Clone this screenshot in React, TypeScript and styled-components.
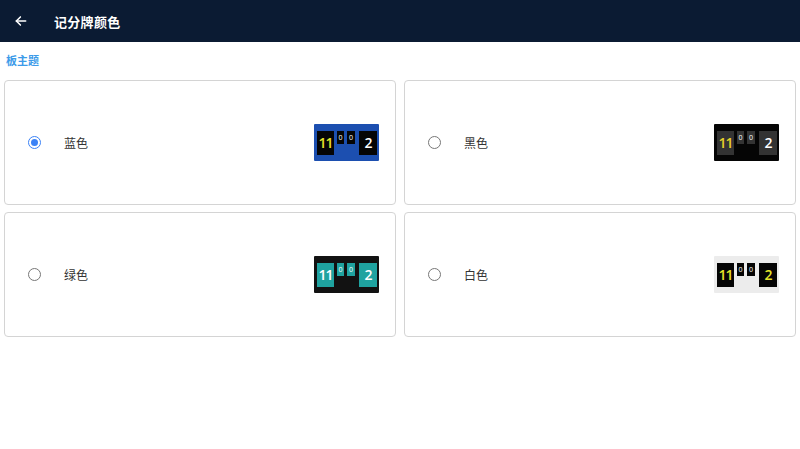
import styled, { createGlobalStyle } from 'styled-components'

const GlobalStyle = createGlobalStyle`
  html, body {
    margin: 0;
    padding: 0;
    background: #ffffff;
    font-family: "Noto Sans CJK SC", "Noto Sans", sans-serif;
  }
`

type Theme = 'blue' | 'black' | 'green' | 'white'

const palettes: Record<Theme, { bg: string; tile: string; small: string; left: string; right: string }> = {
  blue: { bg: '#1c4fb0', tile: '#050505', small: '#050505', left: '#e6e62a', right: '#ffffff' },
  black: { bg: '#050505', tile: '#333333', small: '#333333', left: '#e6d12a', right: '#ffffff' },
  green: { bg: '#121212', tile: '#1fa3a0', small: '#1fa3a0', left: '#ffffff', right: '#ffffff' },
  white: { bg: '#ececec', tile: '#050505', small: '#050505', left: '#e6e62a', right: '#e6e62a' },
}

const options: { id: Theme; label: string }[] = [
  { id: 'blue', label: '蓝色' },
  { id: 'black', label: '黑色' },
  { id: 'green', label: '绿色' },
  { id: 'white', label: '白色' },
]

function App() {
  const selected: Theme = 'blue'
  return (
    <Page>
      <GlobalStyle />
      <Header>
        <BackButton>
          <svg width="14" height="14" viewBox="0 0 24 24" fill="none" stroke="#fff" strokeWidth="2.6" strokeLinecap="round" strokeLinejoin="round">
            <path d="M20 12H4" />
            <path d="M11 5l-7 7 7 7" />
          </svg>
        </BackButton>
        <Title>记分牌颜色</Title>
      </Header>
      <SectionLabel>板主题</SectionLabel>
      <Grid>
        {options.map((o) => (
          <Card key={o.id}>
            <Radio $checked={o.id === selected} />
            <Label>{o.label}</Label>
            <Preview theme={o.id} />
          </Card>
        ))}
      </Grid>
    </Page>
  )
}

function Preview({ theme }: { theme: Theme }) {
  const p = palettes[theme]
  return (
    <Board $bg={p.bg}>
      <BigTile $bg={p.tile} $color={p.left} $w={17}>11</BigTile>
      <SmallTile $bg={p.small} $w={7}>0</SmallTile>
      <SmallTile $bg={p.small} $w={8}>0</SmallTile>
      <BigTile $bg={p.tile} $color={p.right} $w={18}>2</BigTile>
    </Board>
  )
}

export default App

const Page = styled.div`
  width: 800px;
  min-height: 449px;
  background: #ffffff;
`

const Header = styled.div`
  height: 42px;
  background: #0b1b33;
  display: flex;
  align-items: center;
  padding-left: 14px;
  box-sizing: border-box;
`

const BackButton = styled.div`
  width: 14px;
  height: 14px;
  display: flex;
  align-items: center;
  justify-content: center;
  margin-right: 26px;
`

const Title = styled.div`
  color: #ffffff;
  font-size: 13px;
  font-weight: 700;
  letter-spacing: 0.3px;
`

const SectionLabel = styled.div`
  color: #3d9be9;
  font-size: 11px;
  font-weight: 700;
  padding: 10px 0 0 6px;
  height: 28px;
  box-sizing: border-box;
`

const Grid = styled.div`
  display: grid;
  grid-template-columns: 1fr 1fr;
  gap: 7px 8px;
  padding: 10px 4px 0 4px;
`

const Card = styled.div`
  height: 125px;
  border: 1px solid #d4d4d4;
  border-radius: 4px;
  box-sizing: border-box;
  display: flex;
  align-items: center;
  padding: 0 16px 0 23px;
`

const Radio = styled.div<{ $checked: boolean }>`
  width: 13px;
  height: 13px;
  border-radius: 50%;
  box-sizing: border-box;
  border: 1.5px solid ${(p) => (p.$checked ? '#3b82f6' : '#777777')};
  display: flex;
  align-items: center;
  justify-content: center;
  &::after {
    content: '';
    width: 7px;
    height: 7px;
    border-radius: 50%;
    background: ${(p) => (p.$checked ? '#3b82f6' : 'transparent')};
  }
`

const Label = styled.div`
  margin-left: 23px;
  font-size: 12px;
  color: #333333;
  flex: 1;
`

const Board = styled.div<{ $bg: string }>`
  width: 65px;
  height: 37px;
  background: ${(p) => p.$bg};
  display: flex;
  align-items: flex-start;
  padding: 7px 2px 0 3px;
  box-sizing: border-box;
  gap: 3px;
  border-radius: 1px;
`

const BigTile = styled.div<{ $bg: string; $color: string; $w: number }>`
  width: ${(p) => p.$w}px;
  height: 24px;
  background: ${(p) => p.$bg};
  color: ${(p) => p.$color};
  font-family: "Open Sans", "DejaVu Sans", sans-serif;
  font-size: 14px;
  font-weight: 600;
  display: flex;
  align-items: center;
  justify-content: center;
  letter-spacing: -1px;
  line-height: 1;
  &:last-child {
    margin-left: auto;
  }
`

const SmallTile = styled.div<{ $bg: string; $w: number }>`
  width: ${(p) => p.$w}px;
  height: 13px;
  background: ${(p) => p.$bg};
  color: #ffffff;
  font-family: "Open Sans", "DejaVu Sans", sans-serif;
  font-size: 7px;
  display: flex;
  align-items: center;
  justify-content: center;
  line-height: 1;
`
